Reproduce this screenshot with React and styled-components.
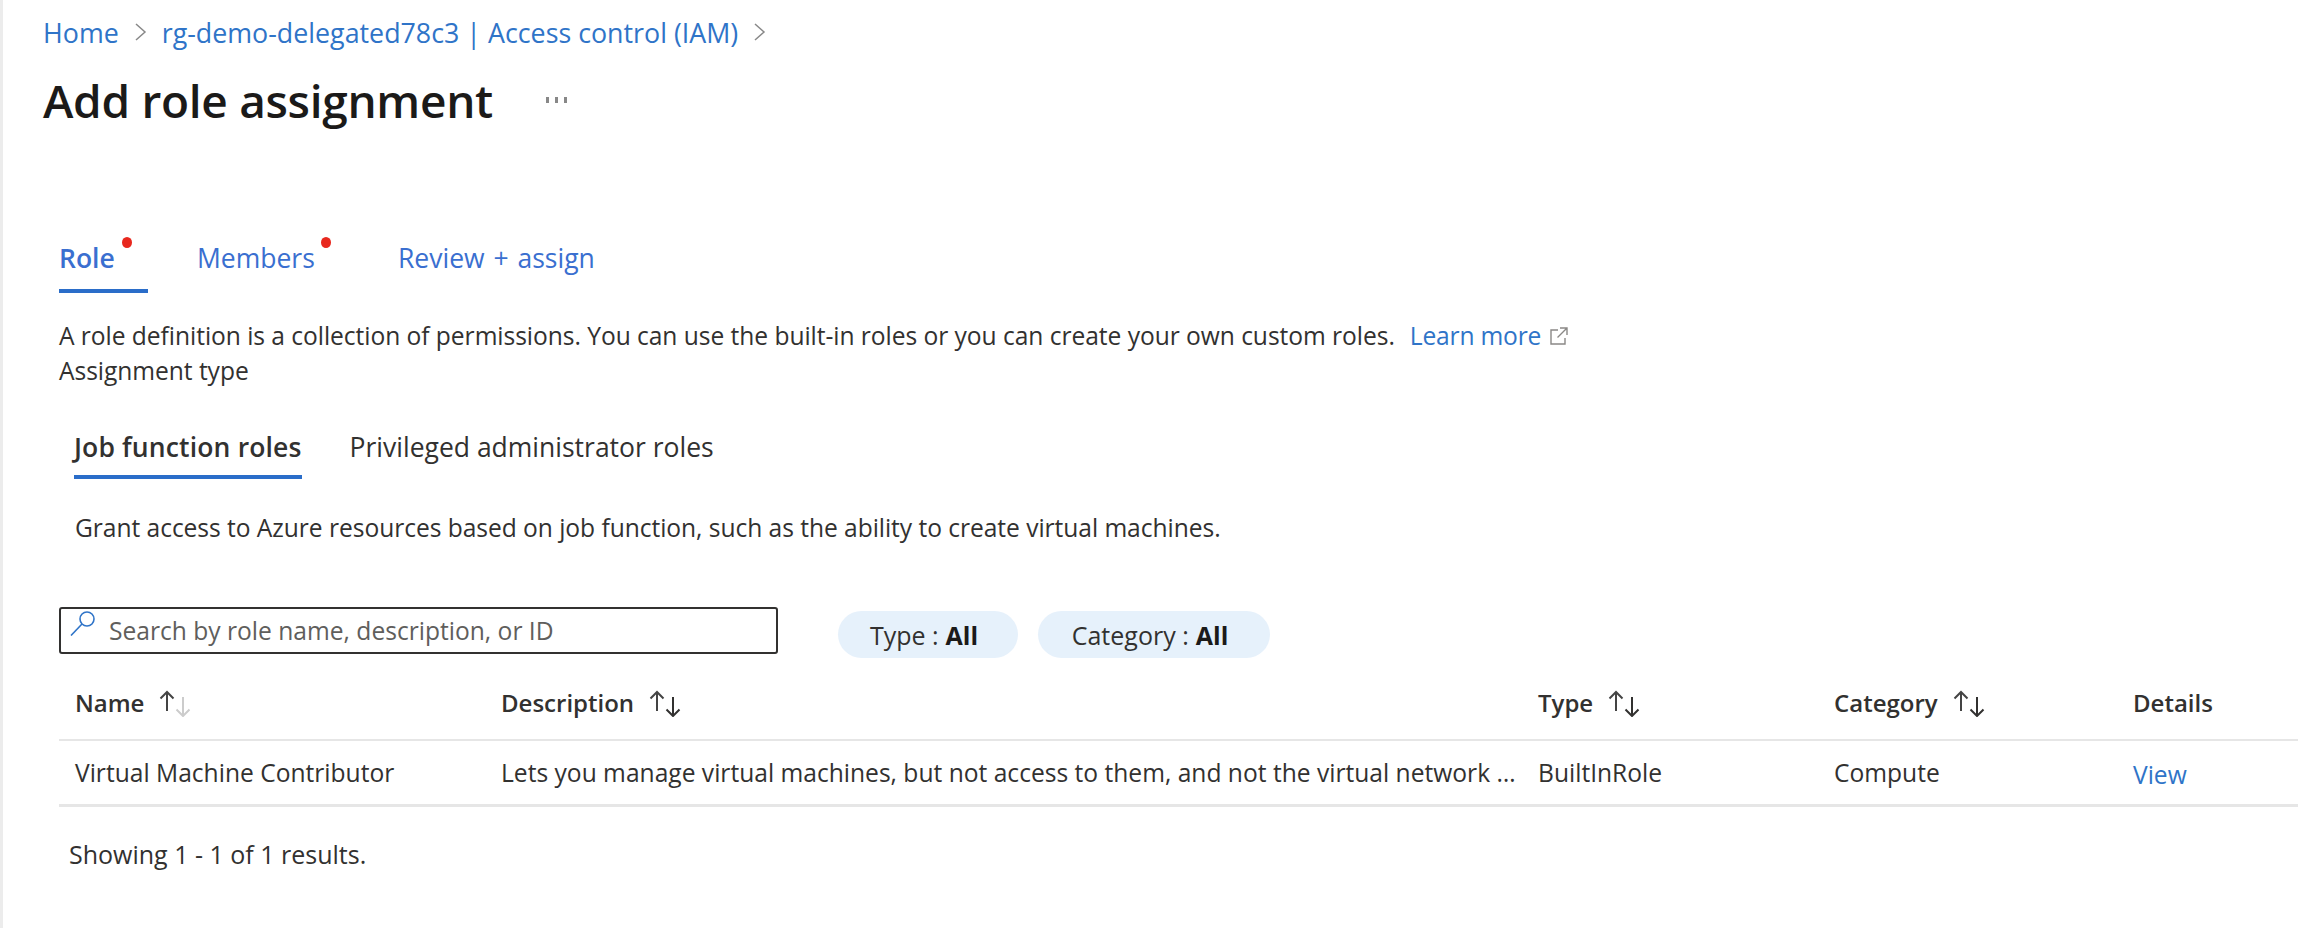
import React from 'react'
import styled, { createGlobalStyle } from 'styled-components'

const GlobalStyle = createGlobalStyle`
  html, body {
    margin: 0;
    padding: 0;
    background: #ffffff;
  }
  body {
    font-family: "Open Sans", "Noto Sans", sans-serif;
    color: #323130;
  }
`

const roleColumns = '426px 1037px 296px 299px 1fr'

const Page = styled.div`
  box-sizing: border-box;
  width: 2298px;
  height: 928px;
  overflow: hidden;
  border-left: 3px solid #ececec;
  padding-left: 40px;
`

const Breadcrumb = styled.nav`
  display: flex;
  align-items: center;
  height: 20px;
  padding-top: 22px;
  font-size: 26.8px;
  color: #2f74c8;
`

const Crumb = styled.span`
  white-space: nowrap;
`

const Chevron = styled.svg`
  width: 13px;
  height: 18px;
  margin: 0 15px;
  fill: none;
  stroke: #888888;
  stroke-width: 1.5;
`

const TitleRow = styled.div`
  display: flex;
  align-items: center;
  height: 66px;
  margin-top: 25px;
`

const Title = styled.h1`
  margin: 0;
  font-size: 46px;
  font-weight: 600;
  letter-spacing: -0.3px;
  color: #1b1a19;
  white-space: nowrap;
`

const MoreDots = styled.svg`
  width: 22px;
  height: 6px;
  margin-left: 53px;
  fill: #888888;
`

const Content = styled.main`
  padding-left: 16px;
`

const WizardTabs = styled.div`
  display: flex;
  margin-top: 108px;
  height: 56px;
`

const WizardTab = styled.div`
  position: relative;
  box-sizing: border-box;
  height: 52px;
  width: ${p => p.$width}px;
  margin-right: ${p => p.$gap}px;
  font-size: 26.5px;
  line-height: 34px;
  word-spacing: 2px;
  white-space: nowrap;
  color: #3a6fd0;
  font-weight: ${p => (p.$active ? 600 : 400)};
  border-bottom: 4px solid ${p => (p.$active ? '#2a6dc9' : 'transparent')};
`

const RedDot = styled.span`
  position: absolute;
  top: -4px;
  left: ${p => p.$left}px;
  width: 10px;
  height: 11px;
  border-radius: 50%;
  background: #e8281e;
`

const BodyText = styled.p`
  margin: 0;
  font-size: 24.6px;
  line-height: 35px;
  letter-spacing: -0.05px;
  white-space: nowrap;
  color: #323130;
`

const Intro = styled(BodyText)`
  display: flex;
  align-items: center;
  margin-top: 21px;
`

const LearnMore = styled.span`
  margin-left: 15px;
  letter-spacing: -0.2px;
  color: #2f74c8;
`

const ExternalIcon = styled.svg`
  width: 18px;
  height: 18px;
  margin-left: 9px;
  fill: none;
  stroke: #8a8886;
  stroke-width: 1.4;
`

const RoleTabs = styled.div`
  display: flex;
  margin-top: 35px;
  padding-left: 15px;
  height: 60px;
`

const RoleTab = styled.div`
  box-sizing: border-box;
  height: 56px;
  font-size: 26.5px;
  line-height: 48px;
  white-space: nowrap;
  color: #323130;
  margin-right: 48px;
  letter-spacing: ${p => (p.$active ? '0.15px' : '0')};
  font-weight: ${p => (p.$active ? 600 : 400)};
  border-bottom: 4px solid ${p => (p.$active ? '#2a6dc9' : 'transparent')};
`

const Hint = styled(BodyText)`
  margin-top: 27px;
  padding-left: 16px;
`

const Filters = styled.div`
  display: flex;
  align-items: flex-start;
  margin-top: 62px;
`

const SearchBox = styled.div`
  box-sizing: border-box;
  display: flex;
  align-items: center;
  width: 719px;
  height: 47px;
  padding-left: 9px;
  border: 2px solid #323130;
  border-radius: 3px;
`

const SearchIcon = styled.svg`
  width: 26px;
  height: 26px;
  margin-bottom: 15px;
  fill: none;
  stroke: #2f74c8;
  stroke-width: 1.6;
  flex: none;
`

const SearchHint = styled.span`
  margin-left: 13px;
  font-size: 24.6px;
  color: #605e5c;
  white-space: nowrap;
`

const Pill = styled.div`
  box-sizing: border-box;
  display: flex;
  align-items: center;
  justify-content: center;
  width: ${p => p.$width}px;
  height: 47px;
  margin-top: 4px;
  margin-left: ${p => p.$gap}px;
  padding-right: 8px;
  border-radius: 24px;
  background: #e6f1fb;
  font-size: 25px;
  white-space: nowrap;
  color: #323130;
`

const PillValue = styled.b`
  margin-left: 7px;
  font-weight: 700;
  color: #1b1a19;
`

const TableRow = styled.div`
  box-sizing: border-box;
  display: grid;
  grid-template-columns: ${roleColumns};
  align-items: center;
  height: ${p => p.$height}px;
  padding-top: ${p => p.$top}px;
  border-bottom: ${p => p.$line}px solid #e6e6e6;
`

const HeadCell = styled.div`
  display: flex;
  align-items: center;
  padding-left: 16px;
  font-size: 24px;
  font-weight: 600;
  color: #323130;
`

const SortIcon = styled.svg`
  width: 34px;
  height: 28px;
  margin-left: 15px;
  fill: none;
  stroke-width: 2;
`

const Cell = styled.div`
  min-width: 0;
  padding-left: 16px;
  font-size: 24.6px;
  white-space: nowrap;
  overflow: hidden;
  text-overflow: ellipsis;
  color: #323130;
`

const ViewLink = styled(Cell)`
  color: #2f74c8;
  padding-top: 3px;
`

const ResultCount = styled(BodyText)`
  margin-top: 30px;
  padding-left: 10px;
  font-size: 25px;
  letter-spacing: 0;
`

const TableWrap = styled.section`
  padding-left: 16px;
`

const SortArrows = ({ muted }) => (
  <SortIcon viewBox="0 0 34 28">
    <path d="M8 22V3M1.5 9.5 8 3l6.5 6.5" stroke="#444444" />
    <path d="M24 8v19M17.5 20.5 24 27l6.5-6.5" stroke={muted ? '#cccccc' : '#323130'} />
  </SortIcon>
)

const App = () => {
  return (
    <Page>
      <GlobalStyle />
      <Breadcrumb>
        <Crumb>Home</Crumb>
        <Chevron viewBox="0 0 13 18"><path d="M2 1l9 8-9 8" /></Chevron>
        <Crumb>rg-demo-delegated78c3 | Access control (IAM)</Crumb>
        <Chevron viewBox="0 0 13 18"><path d="M2 1l9 8-9 8" /></Chevron>
      </Breadcrumb>
      <TitleRow>
        <Title>Add role assignment</Title>
        <MoreDots viewBox="0 0 22 6">
          <rect x="0" y="0" width="3" height="6" />
          <rect x="9" y="0" width="3" height="6" />
          <rect x="18" y="0" width="3" height="6" />
        </MoreDots>
      </TitleRow>
      <Content>
        <WizardTabs>
          <WizardTab $active $width={89} $gap={49}>Role<RedDot $left={63} /></WizardTab>
          <WizardTab $width={115} $gap={86}>Members<RedDot $left={124} /></WizardTab>
          <WizardTab $width={200} $gap={0}>Review + assign</WizardTab>
        </WizardTabs>
        <Intro>
          A role definition is a collection of permissions. You can use the built-in roles or you can create your own custom roles.
          <LearnMore>Learn more</LearnMore>
          <ExternalIcon viewBox="0 0 18 18">
            <path d="M8 3H1v14h14v-6M10 1h7v7M17 1 7.5 10.5" />
          </ExternalIcon>
        </Intro>
        <BodyText>Assignment type</BodyText>
        <RoleTabs>
          <RoleTab $active>Job function roles</RoleTab>
          <RoleTab>Privileged administrator roles</RoleTab>
        </RoleTabs>
        <Hint>Grant access to Azure resources based on job function, such as the ability to create virtual machines.</Hint>
        <Filters>
          <SearchBox>
            <SearchIcon viewBox="0 0 26 26">
              <circle cx="17" cy="9" r="7" />
              <path d="M12 14 1 25.5" />
            </SearchIcon>
            <SearchHint>Search by role name, description, or ID</SearchHint>
          </SearchBox>
          <Pill $width={180} $gap={60}>Type :<PillValue>All</PillValue></Pill>
          <Pill $width={232} $gap={20}>Category :<PillValue>All</PillValue></Pill>
        </Filters>
      </Content>
      <TableWrap>
        <TableRow $height={83} $top={8} $line={2}>
          <HeadCell>Name<SortArrows muted /></HeadCell>
          <HeadCell>Description<SortArrows /></HeadCell>
          <HeadCell>Type<SortArrows /></HeadCell>
          <HeadCell>Category<SortArrows /></HeadCell>
          <HeadCell>Details</HeadCell>
        </TableRow>
        <TableRow $height={66} $top={0} $line={3}>
          <Cell>Virtual Machine Contributor</Cell>
          <Cell>Lets you manage virtual machines, but not access to them, and not the virtual network or storage account they're connected to.</Cell>
          <Cell>BuiltInRole</Cell>
          <Cell>Compute</Cell>
          <ViewLink>View</ViewLink>
        </TableRow>
        <ResultCount>Showing 1 - 1 of 1 results.</ResultCount>
      </TableWrap>
    </Page>
  )
}

export default App
